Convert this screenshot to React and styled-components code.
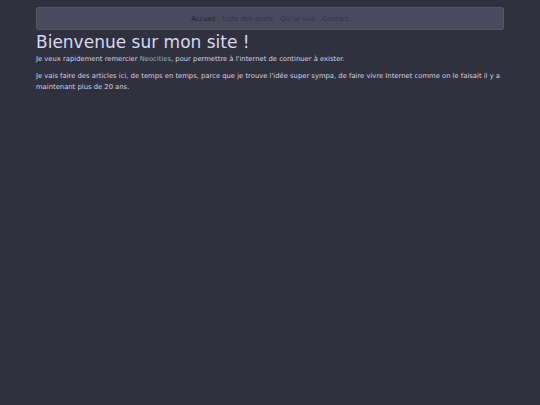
import React from 'react'
import styled, { createGlobalStyle } from 'styled-components'

const GlobalStyle = createGlobalStyle`
    html, body {
        margin: 0;
        padding: 0;
        background: #30303f;
    }
    body {
        font-family: "DejaVu Sans", Verdana, sans-serif;
        color: #d6d6e4;
    }
`

const Page = styled.div`
    min-height: 405px;
    padding: 7px 36px 0;
    box-sizing: border-box;
`

const NavBar = styled.nav`
    display: flex;
    justify-content: center;
    align-items: center;
    gap: 7px;
    height: 23px;
    background: #4a4a5f;
    border: 1px solid #55556a;
    border-radius: 2px;
    box-sizing: border-box;
`

const NavLink = styled.a`
    font-size: 6.8px;
    color: ${props => props.active ? '#1e1e2a' : '#33334a'};
    text-decoration: none;
    cursor: pointer;
`

const Title = styled.h1`
    margin: 2px 0 2px;
    font-size: 17px;
    font-weight: normal;
    line-height: 20px;
    color: #d8d8f0;
`

const Text = styled.p`
    margin: 0 0 6px;
    font-size: 6.8px;
    line-height: 11px;
    color: #d4d4e2;
`

const Link = styled.a`
    color: #7fb3d9;
    text-decoration: none;
`

const links = ['Accueil', 'Liste des posts', 'Qui je suis', 'Contact']

export default function App() {
    return (
        <Page>
            <GlobalStyle />
            <NavBar>
                {links.map((l, i) => <NavLink key={l} active={i === 0}>{l}</NavLink>)}
            </NavBar>
            <Title>Bienvenue sur mon site !</Title>
            <Text>Je veux rapidement remercier <Link>Neocities</Link>, pour permettre à l'internet de continuer à exister.</Text>
            <Text>Je vais faire des articles ici, de temps en temps, parce que je trouve l'idée super sympa, de faire vivre Internet comme on le faisait il y a maintenant plus de 20 ans.</Text>
        </Page>
    )
}
